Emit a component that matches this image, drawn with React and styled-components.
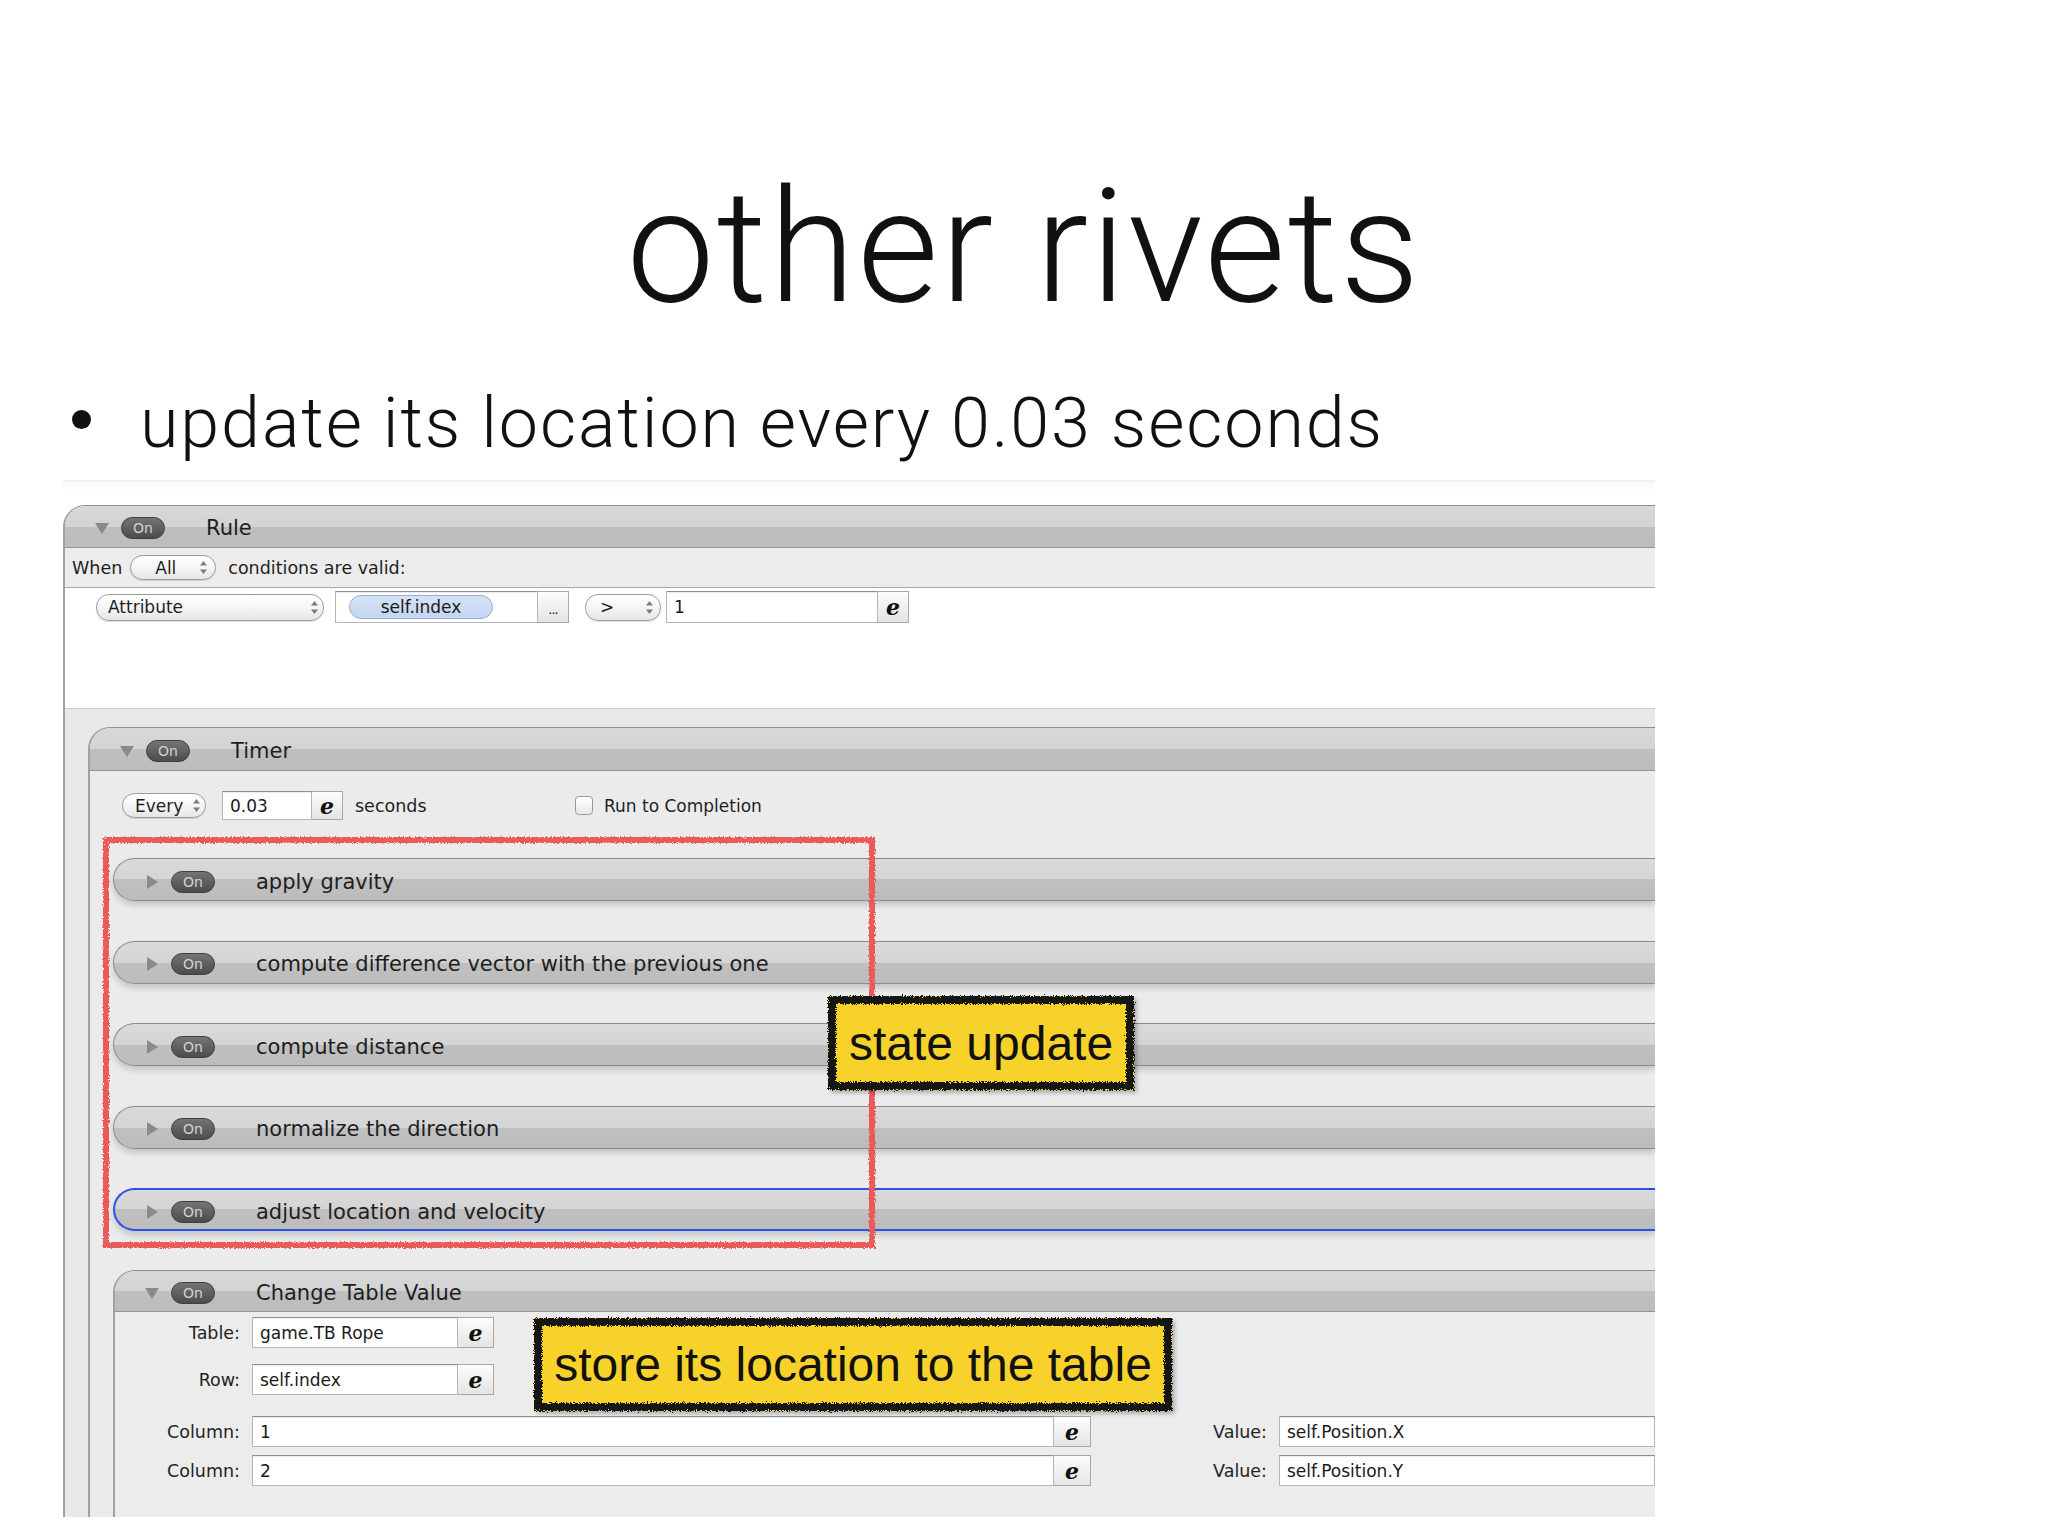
import React from "react";
import styled, { createGlobalStyle, css } from "styled-components";

const GlobalStyle = createGlobalStyle`
  html, body {
    margin: 0;
    padding: 0;
    background: #ffffff;
  }
  body {
    width: 2048px;
    height: 1536px;
    overflow: hidden;
  }
`;

const Slide = styled.div`
  position: relative;
  width: 2048px;
  height: 1536px;
  display: flex;
  flex-direction: column;
  background: #ffffff;
  font-family: Roboto, "Liberation Sans", sans-serif;
  color: #111111;
`;

const Title = styled.h1`
  margin: 169px 0 0;
  font-size: 157px;
  line-height: 156px;
  font-weight: 300;
  text-align: center;
  letter-spacing: 2px;
`;

const BulletRow = styled.div`
  display: flex;
  align-items: flex-start;
  height: 70px;
  margin-top: 63px;
`;

const BulletDot = styled.span`
  width: 19px;
  height: 19px;
  margin: 22px 0 0 72px;
  border-radius: 50%;
  background: #111111;
  flex-shrink: 0;
`;

const BulletText = styled.span`
  margin-left: 49px;
  font-size: 70px;
  line-height: 70px;
  font-weight: 300;
  letter-spacing: 1.9px;
  white-space: nowrap;
`;

/* ---------- the pasted app screenshot ---------- */

const Shot = styled.div`
  position: relative;
  width: 1592px;
  height: 1037px;
  margin: 22px 0 0 63px;
  padding-top: 25px;
  box-sizing: border-box;
  overflow: hidden;
  background: linear-gradient(#eeeeee 0, #fafafa 3px, #ffffff 14px);
  font-family: "DejaVu Sans", Verdana, sans-serif;
  color: #1f1f1f;
`;

const Panel = styled.div`
  display: flex;
  flex-direction: column;
  flex-shrink: 0;
  margin-left: ${(p) => p.$indent || 0}px;
  margin-top: ${(p) => p.$mt || 0}px;
  border-left: 2px solid #a1a1a1;
  border-top: 1px solid #8e8e8e;
  border-top-left-radius: 22px;
  overflow: hidden;
`;

const Header = styled.div`
  display: flex;
  align-items: center;
  flex-shrink: 0;
  height: ${(p) => p.$h || 42}px;
  padding-left: 30px;
  padding-top: 3px;
  box-sizing: border-box;
  background: linear-gradient(#d8d8d8 0%, #d3d3d3 50%, #bfbfbf 50%, #bcbcbc 100%);
  border-bottom: 1px solid #959595;
  font-size: 21px;
`;

const TwistyBox = styled.span`
  display: flex;
  align-items: center;
  width: 14px;
  height: 14px;
  flex-shrink: 0;

  svg {
    fill: #8a8a8a;
  }
`;

const OnPill = styled.span`
  display: inline-flex;
  align-items: center;
  justify-content: center;
  width: 44px;
  height: 22px;
  margin-left: 12px;
  box-sizing: border-box;
  border-radius: 11px;
  border: 1px solid #3f3f3f;
  background: linear-gradient(#747474, #4c4c4c);
  color: #d2d2d2;
  font-size: 14px;
  flex-shrink: 0;
`;

const HeaderTitle = styled.span`
  margin-left: 41px;
  color: #1e1e1e;
  white-space: nowrap;
`;

const WhenRow = styled.div`
  display: flex;
  align-items: center;
  height: 39px;
  padding-left: 7px;
  background: #ececec;
  border-bottom: 1px solid #a9a9a9;
  font-size: 17.5px;
  white-space: nowrap;
`;

const Small = styled.span`
  margin-left: ${(p) => p.$ml || 0}px;
  width: ${(p) => (p.$w ? `${p.$w}px` : "auto")};
  font-size: ${(p) => p.$size || 17.5}px;
  flex-shrink: 0;
  white-space: nowrap;
`;

const Popup = styled.div`
  display: flex;
  align-items: center;
  justify-content: space-between;
  flex-shrink: 0;
  box-sizing: border-box;
  width: ${(p) => p.$w}px;
  height: ${(p) => p.$h || 26}px;
  margin-left: ${(p) => p.$ml || 0}px;
  padding: 0 ${(p) => p.$pr || 7}px 0 ${(p) => p.$pl || 10}px;
  border: 1px solid #9c9c9c;
  border-radius: 13px;
  background: linear-gradient(#ffffff, #f5f5f5 50%, #e6e6e6);
  box-shadow: 0 1px 1px rgba(0, 0, 0, 0.12);
  font-size: 17px;
  color: #1e1e1e;
`;

const StepperIcon = styled.svg`
  fill: #7c7c7c;
  flex-shrink: 0;
`;

const CondBody = styled.div`
  height: 120px;
  background: #ffffff;
`;

const CondRow = styled.div`
  display: flex;
  align-items: center;
  height: 32px;
  margin: 3px 0 0 31px;
`;

const FieldGroup = styled.div`
  display: flex;
  flex-shrink: 0;
  margin-left: ${(p) => p.$ml || 0}px;
`;

const Field = styled.div`
  display: flex;
  align-items: center;
  flex-shrink: 0;
  box-sizing: border-box;
  width: ${(p) => (p.$w ? `${p.$w}px` : "auto")};
  flex-grow: ${(p) => (p.$grow ? 1 : 0)};
  height: ${(p) => p.$h || 31}px;
  padding-left: ${(p) => p.$pl ?? 7}px;
  background: #ffffff;
  border: 1px solid #b7b7b7;
  border-top-color: #8f8f8f;
  box-shadow: inset 0 1px 1px rgba(0, 0, 0, 0.08);
  font-size: 17px;
  color: #1a1a1a;
  white-space: nowrap;
`;

const EButton = styled.div`
  display: flex;
  align-items: center;
  justify-content: center;
  flex-shrink: 0;
  box-sizing: border-box;
  width: ${(p) => p.$w || 31}px;
  height: ${(p) => p.$h || 31}px;
  border: 1px solid #a8a8a8;
  border-left: none;
  background: linear-gradient(#fdfdfd, #e4e4e4);
  font-family: "DejaVu Serif", "Liberation Serif", serif;
  font-weight: bold;
  font-style: italic;
  font-size: 22px;
  color: #111111;
`;

const DotsButton = styled(EButton)`
  align-items: flex-end;
  padding-bottom: 5px;
  font-family: "DejaVu Sans", sans-serif;
  font-style: normal;
  font-weight: normal;
  font-size: 13px;
  letter-spacing: -1px;
`;

const Token = styled.span`
  display: flex;
  align-items: center;
  justify-content: center;
  width: 144px;
  height: 24px;
  box-sizing: border-box;
  border-radius: 12px;
  border: 1px solid #96afd9;
  background: linear-gradient(#d6e3f6, #c3d5f1);
  font-size: 17px;
  color: #1a1a1a;
`;

const GrayZone = styled.div`
  display: flex;
  flex-direction: column;
  padding: 18px 0 0 23px;
  background: #e8e8e8;
  border-top: 1px solid #c9c9c9;
`;

const TimerBody = styled.div`
  display: flex;
  flex-direction: column;
  padding: 20px 0 40px 0;
  background: #ebebeb;
`;

const EveryRow = styled.div`
  display: flex;
  align-items: center;
  height: 29px;
  margin-left: 32px;
`;

const Checkbox = styled.span`
  width: 18px;
  height: 19px;
  box-sizing: border-box;
  border: 1px solid #9a9a9a;
  border-radius: 4px;
  background: linear-gradient(#ffffff, #e9e9e9);
  flex-shrink: 0;
`;

const ActionList = styled.div`
  display: flex;
  flex-direction: column;
  gap: 39.5px;
  margin: 38px 0 0 23px;
`;

const ActionRow = styled.div`
  display: flex;
  align-items: center;
  height: 43px;
  box-sizing: border-box;
  padding: 4px 0 0 31px;
  border: 1px solid #8c8c8c;
  border-right: none;
  border-radius: 22px 0 0 22px;
  background: linear-gradient(#dadada, #d4d4d4 50%, #c0c0c0 50%, #bcbcbc);
  box-shadow: 0 4px 6px rgba(0, 0, 0, 0.17);
  font-size: 21px;

  ${(p) =>
    p.$selected &&
    css`
      padding-left: 30px;
      border: 2px solid #2e4ff0;
      border-right: none;
    `}
`;

const FormBody = styled.div`
  display: flex;
  flex-direction: column;
  padding: 5px 0 60px 0;
  background: #ececec;
`;

const FormRow = styled.div`
  display: flex;
  align-items: center;
  height: 31px;
  margin-top: ${(p) => p.$mt || 0}px;
`;

const FormLabel = styled.span`
  width: ${(p) => p.$w || 125}px;
  margin-right: 12px;
  text-align: right;
  font-size: 17.5px;
  color: #242424;
  flex-shrink: 0;
  white-space: nowrap;
`;

/* ---------- overlays drawn on top of the screenshot ---------- */

const Defs = styled.svg`
  position: absolute;
  width: 0;
  height: 0;
`;

const RedBox = styled.div`
  position: absolute;
  left: 40px;
  top: 357px;
  width: 772px;
  height: 411px;
  box-sizing: border-box;
  border: 6px solid #ea5a5a;
  filter: url(#rough);
`;

const Callout = styled.div`
  position: absolute;
  left: ${(p) => p.$x}px;
  top: ${(p) => p.$y}px;
  width: ${(p) => p.$w}px;
  height: ${(p) => p.$h}px;
  display: flex;
  align-items: center;
  justify-content: center;
  background: #f6d22b;
  box-shadow: 3px 3px 4px rgba(0, 0, 0, 0.25);
  font-family: "Liberation Sans", Arial, sans-serif;
  font-size: 48px;
  color: #111111;
  white-space: nowrap;

  &::before {
    content: "";
    position: absolute;
    inset: 0;
    border: 8px solid #121212;
    filter: url(#roughDark);
  }
`;

const Twisty = ({ open }) => (
  <TwistyBox>
    <svg width="14" height="14" viewBox="0 0 14 14">
      {open ? (
        <polygon points="0,2 14,2 7,13" />
      ) : (
        <polygon points="2,0 13,7 2,14" />
      )}
    </svg>
  </TwistyBox>
);

const Stepper = () => (
  <StepperIcon width="7" height="13" viewBox="0 0 7 13">
    <polygon points="3.5,0 7,4.5 0,4.5" />
    <polygon points="0,8.5 7,8.5 3.5,13" />
  </StepperIcon>
);

const actions = [
  "apply gravity",
  "compute difference vector with the previous one",
  "compute distance",
  "normalize the direction",
  "adjust location and velocity",
];

const App = () => {
  return (
    <Slide>
      <GlobalStyle />
      <Title>other rivets</Title>

      <BulletRow>
        <BulletDot />
        <BulletText>update its location every 0.03 seconds</BulletText>
      </BulletRow>

      <Shot>
        <Defs>
          <filter id="rough" x="-5%" y="-5%" width="110%" height="110%">
            <feTurbulence
              type="fractalNoise"
              baseFrequency="0.8"
              numOctaves="2"
              result="noise"
            />
            <feDisplacementMap in="SourceGraphic" in2="noise" scale="4" />
          </filter>
          <filter id="roughDark" x="-5%" y="-5%" width="110%" height="110%">
            <feTurbulence
              type="fractalNoise"
              baseFrequency="0.9"
              numOctaves="2"
              result="noise"
            />
            <feDisplacementMap in="SourceGraphic" in2="noise" scale="6" />
          </filter>
        </Defs>

        <Panel>
          <Header>
            <Twisty open />
            <OnPill>On</OnPill>
            <HeaderTitle>Rule</HeaderTitle>
          </Header>

          <WhenRow>
            <Small>When</Small>
            <Popup $w={86} $h={25} $ml={8} $pl={24} $pr={8}>
              All
              <Stepper />
            </Popup>
            <Small $ml={12}>conditions are valid:</Small>
          </WhenRow>

          <CondBody>
            <CondRow>
              <Popup $w={228} $h={27} $pl={11} $pr={5}>
                Attribute
                <Stepper />
              </Popup>
              <FieldGroup $ml={11}>
                <Field $w={203} $h={32} $pl={13}>
                  <Token>self.index</Token>
                </Field>
                <DotsButton $h={32}>...</DotsButton>
              </FieldGroup>
              <Popup $w={76} $h={27} $ml={16} $pl={14} $pr={7}>
                &gt;
                <Stepper />
              </Popup>
              <FieldGroup $ml={5}>
                <Field $w={212} $h={32}>
                  1
                </Field>
                <EButton $h={32}>e</EButton>
              </FieldGroup>
            </CondRow>
          </CondBody>

          <GrayZone>
            <Panel>
              <Header $h={43}>
                <Twisty open />
                <OnPill>On</OnPill>
                <HeaderTitle>Timer</HeaderTitle>
              </Header>

              <TimerBody>
                <EveryRow>
                  <Popup $w={84} $h={25} $pl={12} $pr={5}>
                    Every
                    <Stepper />
                  </Popup>
                  <FieldGroup $ml={16}>
                    <Field $w={90} $h={29}>
                      0.03
                    </Field>
                    <EButton $h={29}>e</EButton>
                  </FieldGroup>
                  <Small $ml={12} $w={220}>
                    seconds
                  </Small>
                  <Checkbox />
                  <Small $ml={11} $size={17}>
                    Run to Completion
                  </Small>
                </EveryRow>

                <ActionList>
                  {actions.map((name, i) => (
                    <ActionRow key={name} $selected={i === actions.length - 1}>
                      <Twisty />
                      <OnPill>On</OnPill>
                      <HeaderTitle>{name}</HeaderTitle>
                    </ActionRow>
                  ))}
                </ActionList>

                <Panel $indent={23} $mt={39}>
                  <Header $h={41}>
                    <Twisty open />
                    <OnPill>On</OnPill>
                    <HeaderTitle>Change Table Value</HeaderTitle>
                  </Header>
                  <FormBody>
                    <FormRow $mt={0}>
                      <FormLabel>Table:</FormLabel>
                      <Field $w={206}>game.TB Rope</Field>
                      <EButton $w={36}>e</EButton>
                    </FormRow>
                    <FormRow $mt={16}>
                      <FormLabel>Row:</FormLabel>
                      <Field $w={206}>self.index</Field>
                      <EButton $w={36}>e</EButton>
                    </FormRow>
                    <FormRow $mt={21}>
                      <FormLabel>Column:</FormLabel>
                      <Field $w={802}>1</Field>
                      <EButton $w={37}>e</EButton>
                      <FormLabel $w={176}>Value:</FormLabel>
                      <Field $grow>self.Position.X</Field>
                    </FormRow>
                    <FormRow $mt={8}>
                      <FormLabel>Column:</FormLabel>
                      <Field $w={802}>2</Field>
                      <EButton $w={37}>e</EButton>
                      <FormLabel $w={176}>Value:</FormLabel>
                      <Field $grow>self.Position.Y</Field>
                    </FormRow>
                  </FormBody>
                </Panel>
              </TimerBody>
            </Panel>
          </GrayZone>
        </Panel>

        <RedBox />
        <Callout $x={765} $y={516} $w={306} $h={94}>
          state update
        </Callout>
        <Callout $x={471} $y={838} $w={638} $h={93}>
          store its location to the table
        </Callout>
      </Shot>
    </Slide>
  );
};

export default App;
